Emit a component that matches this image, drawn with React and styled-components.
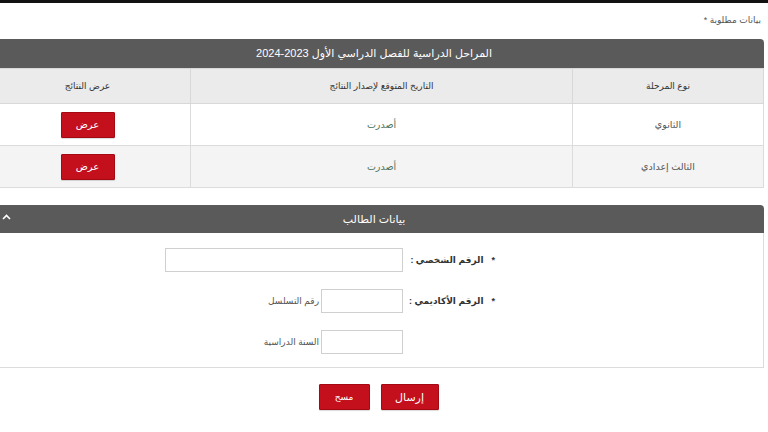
import React from "react";
import styled, { createGlobalStyle } from "styled-components";

const GlobalStyle = createGlobalStyle`
  html, body {
    margin: 0;
    padding: 0;
    background: #ffffff;
    font-family: "Liberation Sans", "DejaVu Sans", sans-serif;
  }
`;

const Page = styled.div`
  width: 768px;
  height: 432px;
  overflow: hidden;
  background: #fff;
  border-top: 3px solid #111;
  box-sizing: border-box;
`;

const Content = styled.div`
  width: 779px;
  margin-left: -15px;
  direction: rtl;
`;

const Required = styled.div`
  font-size: 9px;
  color: #555;
  padding: 12px 3px 0 0;
  height: 24px;
  box-sizing: border-box;
`;

const Panel = styled.div`
  margin-top: ${(p) => p.$top || 0}px;
  margin-left: -1px;
`;

const Bar = styled.div`
  background: #5a5a5a;
  color: #fff;
  height: ${(p) => p.$h}px;
  display: flex;
  align-items: center;
  justify-content: center;
  font-size: ${(p) => p.$fs}px;
  border-radius: 4px 4px 0 0;
  position: relative;
`;

const Caret = styled.svg`
  position: absolute;
  left: 18px;
  top: 9px;
`;

const Table = styled.table`
  width: 100%;
  border-collapse: collapse;
  font-size: 9px;
  color: #444;
`;

const Th = styled.th`
  background: #ebebeb;
  border: 1px solid #d8d8d8;
  height: 32px;
  font-weight: normal;
  color: #333;
  width: ${(p) => p.$w};
`;

const Tr = styled.tr`
  background: ${(p) => (p.$alt ? "#f4f4f4" : "#fff")};
`;

const Td = styled.td`
  border: 1px solid #dcdcdc;
  height: 41px;
  padding: 0;
  text-align: center;
  font-size: 9.5px;
  color: ${(p) => p.$color || "#555"};
`;

const RedButton = styled.button`
  background: #c40f1c;
  color: #fff;
  border: 1px solid #a50a14;
  border-radius: 1px;
  font-family: inherit;
  font-size: ${(p) => p.$fs || 10}px;
  width: ${(p) => p.$w}px;
  height: ${(p) => p.$h}px;
  padding: 0;
  box-shadow: 0 1px 1px rgba(0, 0, 0, 0.15);
  vertical-align: middle;
`;

const FormBody = styled.div`
  border: 1px solid #dcdcdc;
  border-top: none;
  padding: 15px 0 13px;
  display: flex;
  flex-direction: column;
  gap: 17px;
`;

const Row = styled.div`
  display: flex;
  align-items: center;
  padding-right: 268px;
  height: 24px;
`;

const Label = styled.label`
  width: 92px;
  font-size: 9px;
  font-weight: bold;
  color: #333;
`;

const Star = styled.span`
  margin-left: 8px;
`;

const Input = styled.input`
  width: ${(p) => p.$w}px;
  height: 24px;
  box-sizing: border-box;
  border: 1px solid #cfcfcf;
  background: #fff;
`;

const Hint = styled.span`
  font-size: 9px;
  color: #555;
  margin-right: 2px;
`;

const Actions = styled.div`
  display: flex;
  justify-content: center;
  gap: 11px;
  padding: 16px 0 0 8px;
`;

export default function App() {
  return (
    <>
      <GlobalStyle />
      <Page>
        <Content>
          <Required>بيانات مطلوبة *</Required>
          <Panel $top={12}>
            <Bar $h={29} $fs={11}>المراحل الدراسية للفصل الدراسي الأول 2023-2024</Bar>
            <Table>
              <thead>
                <tr>
                  <Th $w="188px">نوع المرحلة</Th>
                  <Th $w="379px">التاريخ المتوقع لإصدار النتائج</Th>
                  <Th>عرض النتائج</Th>
                </tr>
              </thead>
              <tbody>
                <Tr>
                  <Td>الثانوي</Td>
                  <Td $color="#4c7560">أصدرت</Td>
                  <Td>
                    <RedButton $w={54} $h={26}>عرض</RedButton>
                  </Td>
                </Tr>
                <Tr $alt>
                  <Td>الثالث إعدادي</Td>
                  <Td $color="#4c7560">أصدرت</Td>
                  <Td>
                    <RedButton $w={54} $h={26}>عرض</RedButton>
                  </Td>
                </Tr>
              </tbody>
            </Table>
          </Panel>
          <Panel $top={17}>
            <Bar $h={28} $fs={11}>
              بيانات الطالب
              <Caret width="9" height="6" viewBox="0 0 9 6">
                <path d="M1 5 L4.5 1.5 L8 5" fill="none" stroke="#fff" strokeWidth="1.6" />
              </Caret>
            </Bar>
            <FormBody>
              <Row>
                <Label>
                  <Star>*</Star>الرقم الشخصي :
                </Label>
                <Input $w={238} />
              </Row>
              <Row>
                <Label>
                  <Star>*</Star>الرقم الأكاديمي :
                </Label>
                <Input $w={82} />
                <Hint>رقم التسلسل</Hint>
              </Row>
              <Row>
                <Label />
                <Input $w={82} />
                <Hint>السنة الدراسية</Hint>
              </Row>
            </FormBody>
          </Panel>
          <Actions>
            <RedButton $w={58} $h={26} $fs={11}>إرسال</RedButton>
            <RedButton $w={51} $h={26} $fs={9}>مسح</RedButton>
          </Actions>
        </Content>
      </Page>
    </>
  );
}
